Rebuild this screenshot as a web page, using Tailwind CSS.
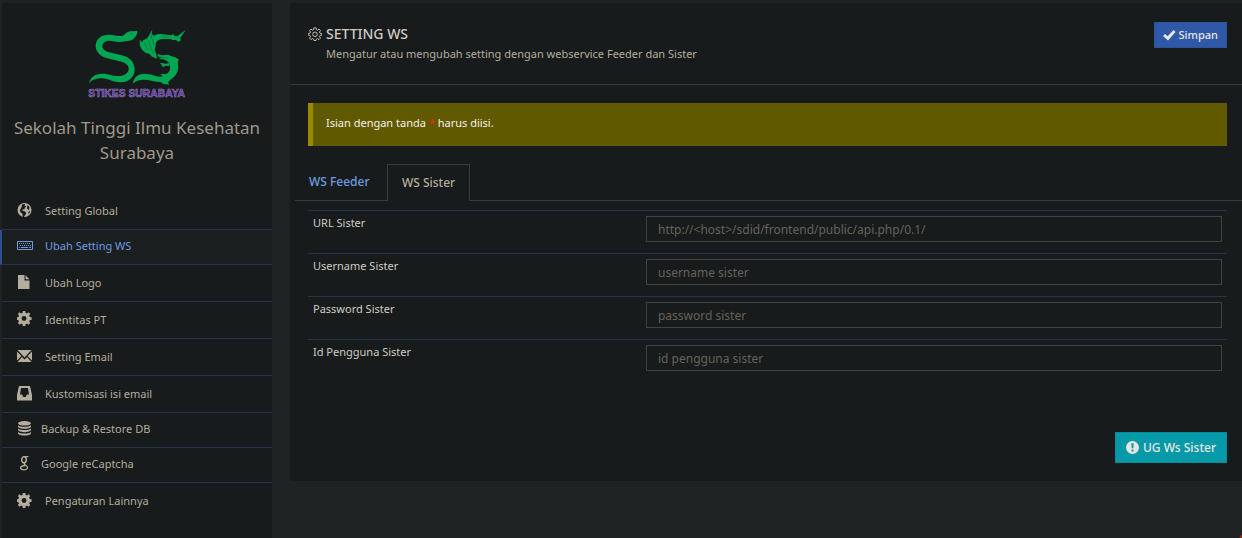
<!DOCTYPE html>
<html lang="id">
<head>
<meta charset="utf-8">
<meta name="viewport" content="width=device-width, initial-scale=1">
<title>Setting WS</title>
<script src="https://cdn.jsdelivr.net/npm/@tailwindcss/browser@4"></script>
</head>
<body class="flex min-h-screen items-stretch gap-[18px] overflow-x-hidden bg-[#1f2324] pt-[3px] font-['Noto_Sans',sans-serif] text-[11px] text-[#b5ad9e]">
<svg class="hidden">
  <symbol id="cog" viewBox="0 0 16 16"><path fill="currentColor" fill-rule="evenodd" d="M6.200 0h2.600l.4 2 1.400.6 1.700-1.200 1.800 1.800-1.200 1.700.6 1.400 2 .4v2.600l-2 .4-.6 1.400 1.200 1.700-1.800 1.800-1.700-1.200-1.400.6-.4 2H6.200l-.4-2-1.400-.6-1.700 1.200L.9 12.800l1.200-1.700-.6-1.400-1.500-.4V6.700l1.500-.4.6-1.400L.9 3.200l1.800-1.800 1.700 1.200 1.400-.6zM7.500 5.300a2.600 2.600 0 1 0 0 5.200 2.600 2.600 0 0 0 0-5.200z"/></symbol>
</svg>

<aside class="w-[272px] shrink-0 pl-[2px]">
  <div class="h-full bg-[#171b1b]">
    <header class="px-2 pt-[25px]">
      <svg class="mx-auto h-[71px] w-[100px]" viewBox="22 25 300 213" role="img" aria-label="STIKES Surabaya">
        <g fill="#00a651">
          <path d="M27 193C32 171 47 162 68 162C91 162 99 171 120 169C136 167 146 160 147 148C147 136 137 128 116 124L80 115C60 109 47 95 48 76C50 56 65 45 87 45C105 45 116 51 129 48C138 44 140 37 150 35L173 34C174 42 169 50 161 58C153 65 145 63 136 65C119 70 105 64 89 63C76 63 68 70 68 80C69 91 78 96 94 99L127 107C151 113 165 127 165 150C164 173 147 187 123 188C99 188 84 175 64 176C45 177 35 181 27 193Z"/>
          <path d="M218 29L216 42L224 50L222 62L229 76L225 90L230 105L232 117L217 111L209 102L198 100L188 91L181 79L180 60L187 68L191 62L203 55L210 44Z"/>
          <path d="M222 49C235 38 257 45 275 47L282 43L284 49L293 50L318 31L306 49L302 54L303 63L294 66L289 60L281 62L272 58L246 59C234 60 229 67 227 76L219 66Z"/>
          <path d="M234 103L248 107L266 105L274 109L287 113L298 120L294 127L296 145C294 160 287 170 274 179L265 188L269 195L249 192L244 187C225 187 207 179 188 180C174 181 166 185 159 192C162 174 174 162 195 162C216 162 226 171 242 171L251 169L241 165L248 162L258 164C268 160 273 150 271 139C270 129 263 122 250 119L236 118L247 114L234 110Z"/>
          <path d="M268 139L257 138L249 143L246 136L241 129L251 131L258 132L269 130Z"/>
        </g>
        <circle cx="155" cy="43" r="2" fill="#0d5532"/>
        <path d="M194 69l11 24m-1-34l17 43m-7-56l10 35M239 112l26 3M248 52l22 1" fill="none" stroke="#176b3d" stroke-width="2"/>
        <text x="171" y="232" text-anchor="middle" font-family="Liberation Sans, sans-serif" font-size="31" font-weight="700" fill="#5b2cab" stroke="#9885b5" stroke-width="1.500">STIKES SURABAYA</text>
      </svg>
      <h1 class="mt-4 text-center text-[17px] leading-[25px] text-[#a0988a]">Sekolah Tinggi Ilmu Kesehatan Surabaya</h1>
    </header>
    <nav class="mt-7">
      <a href="#" class="flex h-[37px] items-center border-b border-[#263449] pl-[15px]">
        <svg class="mr-3 size-4" viewBox="0 0 16 16"><circle cx="7.500" cy="7" r="7" fill="#b5ad9e"/><path fill="#171b1b" d="M5 1.500L8.100 1 7.500 2.700l2 .8-1.800 1.200-.2 1.500-2 .2-.3 1.200 1.500.5 2 .8.400 2-1.800 2-.5 1.500-1.100-.7-.2-3-2-1.500-.6-2 1-1.700L4.500 4.300zM10.500 2l2 2-.5 3-2-1.500.3-2zM11.500 8.500l1.500-.5-.5 2-1.200 1z"/></svg>Setting Global</a>
      <a href="#" aria-current="page" class="-ml-[2px] flex h-[35px] items-center border-b border-l-2 border-b-[#263449] border-l-[#2f4d8f] bg-[#1b1f20] pb-[2px] pl-[15px] text-[#6d9be0]">
        <svg class="mr-3 size-4" viewBox="0 0 16 16" fill="none" stroke="currentColor"><path d="M.5 3.500h15v8H.5z"/><path stroke-dasharray="1 1" d="M2 5.500h12M3 7.500h11"/><path d="M2 9.500h1m1 0h7m1 0h2"/></svg>Ubah Setting WS</a>
      <a href="#" class="flex h-[37px] items-center border-b border-[#263449] pl-[15px]">
        <svg class="mr-3 size-4" viewBox="0 0 16 16" fill="currentColor"><path d="M1 0h6.500v5.500H12.500V14H1zM8.500.3l4 4h-4z"/></svg>Ubah Logo</a>
      <a href="#" class="flex h-[37px] items-center border-b border-[#263449] pl-[15px]">
        <svg class="mr-3 mb-[2px] size-4" viewBox="0 0 17 17"><use href="#cog" width="16" height="16"/></svg>Identitas PT</a>
      <a href="#" class="flex h-[37px] items-center border-b border-[#263449] pl-[15px]">
        <svg class="mr-3 size-4" viewBox="0 0 16 16" fill="currentColor"><path d="M.5 1h14L7.500 8.500zM0 2.500L4.500 7 0 11.500zM15 2.500L10.500 7l4.500 4.500zM5 8l2.500 2.500L10 8l4.500 5H.5z"/></svg>Setting Email</a>
      <a href="#" class="flex h-[37px] items-center border-b border-[#263449] pl-[15px]">
        <svg class="mr-3 size-4" viewBox="0 0 16 16"><path fill="currentColor" fill-rule="evenodd" d="M2 0h11L15 9v5.500H0V9zM4 2L3 8.500h2.200l1 2.500h2.600l1-2.500H12L11 2z"/></svg>Kustomisasi isi email</a>
      <a href="#" class="flex h-[35px] items-center border-b border-[#263449] pb-[2px] pl-[15px]">
        <svg class="mr-2 size-4" viewBox="0 0 16 16" fill="currentColor"><ellipse cx="7.500" cy="2.300" rx="6.500" ry="2.300"/><path d="M1 4.200c2 2 11 2 13 0v1.500c-1 2.700-12 2.700-13 0zM1 7.600c2 2 11 2 13 0v1.500c-1 2.700-12 2.700-13 0zM1 11c2 2 11 2 13 0v1.500c-1 2.700-12 2.700-13 0z"/></svg>Backup &amp; Restore DB</a>
      <a href="#" class="flex h-[35px] items-center border-b border-[#263449] pb-[2px] pl-[15px]">
        <svg class="mr-2 size-4" viewBox="0 0 16 16" fill="none" stroke="currentColor"><ellipse cx="7" cy="3.800" rx="2.300" ry="3" stroke-width="1.500"/><path d="M7.500.6h4" stroke-width="1.100"/><path d="M8.200 6.600C6 8.300 8 8.600 9.300 9.700c2.600 2 .8 4.100-2.500 4.100-3.400 0-4.200-2.600-2-3.700.8-.4 2-.6 3.300-.6" stroke-width="1.300"/></svg>Google reCaptcha</a>
      <a href="#" class="flex h-[37px] items-center pl-[15px]">
        <svg class="mr-3 mb-[2px] size-4" viewBox="0 0 17 17"><use href="#cog" width="16" height="16"/></svg>Pengaturan Lainnya</a>
    </nav>
  </div>
</aside>

<main class="min-w-0 flex-1 self-start bg-[#171b1b] pb-[18px]">
  <header class="flex h-[82px] items-start justify-between border-b border-[#373c3e] pt-[19px] pr-[15px] pl-[18px]">
    <div class="flex gap-1">
      <svg class="mt-[5px] size-[14px] text-[#c8c3ba]" viewBox="0 0 16 16" fill="none" stroke="currentColor" stroke-width="1.100"><path d="M6.800 1h2.400l.4 2 1.300.6 1.700-1.200 1.700 1.700-1.200 1.700.6 1.300 2 .4v1.800l-2 .4-.6 1.300 1.200 1.700-1.700 1.700-1.700-1.200-1.300.6-.4 1.700H6.800l-.4-1.700-1.300-.6-1.700 1.200-1.700-1.700 1.200-1.700-.6-1.300-2-.4V7.500l2-.4.6-1.300-1.200-1.700 1.700-1.700 1.700 1.200 1.300-.6z"/><circle cx="8" cy="8.300" r="2.600"/></svg>
      <div>
        <h2 class="text-[14px] leading-6 font-medium text-[#d0ccc4]">SETTING WS</h2>
        <p class="text-[11px] leading-4">Mengatur atau mengubah setting dengan webservice Feeder dan Sister</p>
      </div>
    </div>
    <button type="button" class="flex h-[26px] items-center gap-[3px] border border-[#2b5597] bg-[#3058a8] px-2 text-[11px] font-medium text-[#e8e6e3]">
      <svg class="size-[13px]" viewBox="0 0 13 13" fill="currentColor"><path d="M0 7l2-2 2.700 2.200L10.500 1 12.500 3 5 11.500z"/></svg>Simpan</button>
  </header>

  <div role="alert" class="mt-[18px] mr-[15px] ml-[18px] flex h-[43px] items-start border-l-[5px] border-[#998a00] bg-[#605900] pt-3 pl-[13px] leading-4 text-[#f4f2e8]">
    <p>Isian dengan tanda <span class="text-[#ff1a1a]">*</span> harus diisi.</p>
  </div>

  <div role="tablist" class="mt-[18px] ml-[5px] flex h-[37px] text-xs">
    <button type="button" role="tab" aria-selected="false" class="w-[92px] border-b border-[#373c3e] pl-[14px] text-left font-medium text-[#6d9be0]">WS Feeder</button>
    <button type="button" role="tab" aria-selected="true" class="w-[83px] border border-b-0 border-[#373c3e] pb-px text-center font-medium">WS Sister</button>
    <div class="flex-1 border-b border-[#373c3e]"></div>
  </div>

  <form class="mt-[9px] mr-[15px] ml-[18px] text-[#d0ccc4]">
    <div class="grid h-[43px] grid-cols-[25fr_44fr] items-start border-t border-[#263449] pt-[5px]">
      <label for="url" class="pl-[5px] leading-[14px]">URL Sister</label>
      <div class="px-[5px]"><input id="url" type="text" placeholder="http://&lt;host&gt;/sdid/frontend/public/api.php/0.1/" class="block h-[26px] w-full border border-[#3e4446] px-[11px] text-xs placeholder:text-[#65625c]"></div>
    </div>
    <div class="grid h-[43px] grid-cols-[25fr_44fr] items-start border-t border-[#263449] pt-[5px]">
      <label for="user" class="pl-[5px] leading-[14px]">Username Sister</label>
      <div class="px-[5px]"><input id="user" type="text" placeholder="username sister" class="block h-[26px] w-full border border-[#3e4446] px-[11px] text-xs placeholder:text-[#65625c]"></div>
    </div>
    <div class="grid h-[43px] grid-cols-[25fr_44fr] items-start border-t border-[#263449] pt-[5px]">
      <label for="pass" class="pl-[5px] leading-[14px]">Password Sister</label>
      <div class="px-[5px]"><input id="pass" type="password" placeholder="password sister" class="block h-[26px] w-full border border-[#3e4446] px-[11px] text-xs placeholder:text-[#65625c]"></div>
    </div>
    <div class="grid h-[43px] grid-cols-[25fr_44fr] items-start border-t border-[#263449] pt-[5px]">
      <label for="idp" class="pl-[5px] leading-[14px]">Id Pengguna Sister</label>
      <div class="px-[5px]"><input id="idp" type="text" placeholder="id pengguna sister" class="block h-[26px] w-full border border-[#3e4446] px-[11px] text-xs placeholder:text-[#65625c]"></div>
    </div>
    <div class="mt-[50px] flex justify-end">
      <button type="button" class="flex h-[31px] items-center gap-1 border border-[#078c99] bg-[#069aa8] px-[10px] text-xs font-medium text-[#e8e6e3]">
        <svg class="size-[13px]" viewBox="0 0 13 13"><circle cx="6.500" cy="6.500" r="6.500" fill="currentColor"/><path fill="#069aa8" d="M5.300 2.300h2.400l-.4 5H5.700zM5.500 8.500h2v2h-2z"/></svg>UG Ws Sister</button>
    </div>
  </form>
</main>

<div class="fixed -right-[13px] -bottom-[11px] size-4 rounded-full bg-[#b81f00]"></div>
</body>
</html>
